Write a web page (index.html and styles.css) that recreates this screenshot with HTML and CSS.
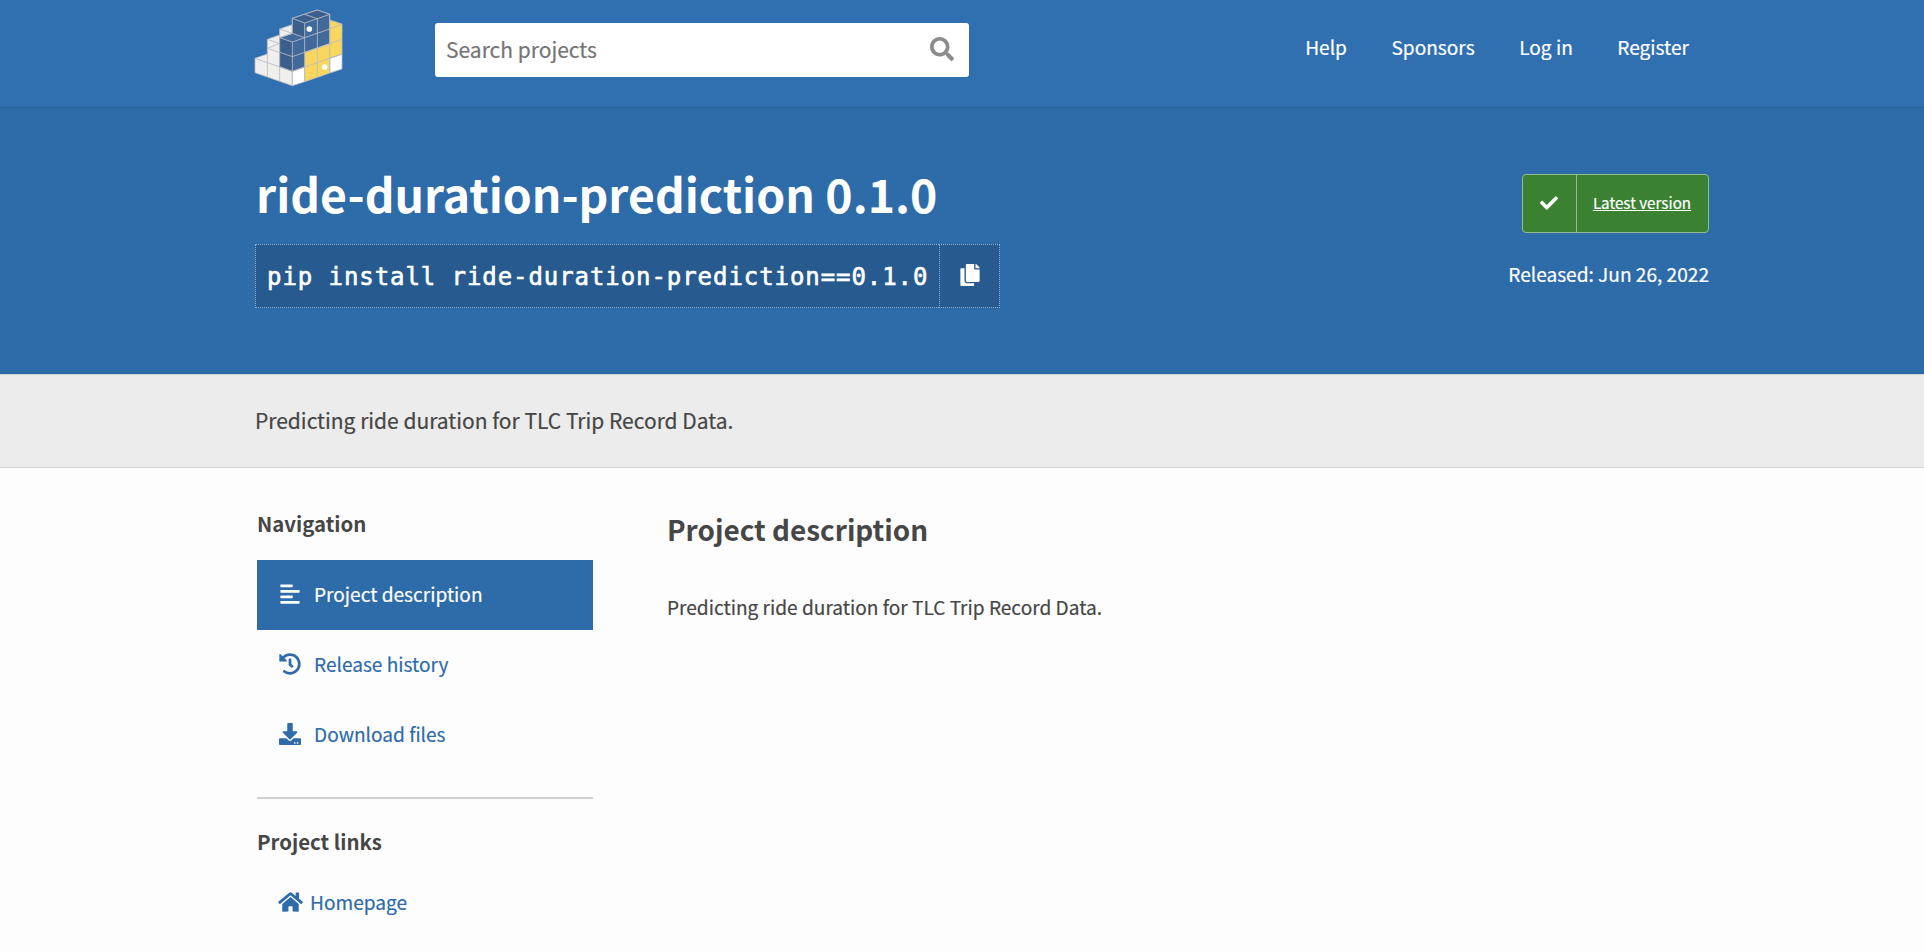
FILE: index.html
```html
<!DOCTYPE html>
<html lang="en">
<head>
<meta charset="utf-8">
<title>ride-duration-prediction · PyPI</title>
<link rel="stylesheet" href="styles.css">
</head>
<body>
<header class="site-header">
  <div class="container header-row">
    <a class="logo" href="#" aria-label="PyPI">
      <svg width="89" height="78" viewBox="42 27 267 234" stroke="#b9bcc4" stroke-width="2.6" stroke-linejoin="round">
        <path fill="#efefed" d="M45 175L82 162V118L119 105V87L157 74V257L45 218Z"/>
        <path fill="none" d="M45 175L157 214M82 162V231M119 105V244M82 118L119 131M82 145L119 158M82 145L119 130M119 87L157 100"/>
        <path fill="#fff" d="M157 214L194 201V245L157 257ZM269 175L306 162V207L269 219Z"/>
        <path fill="#f9d65c" d="M269 60L306 72V162L269 175V219L194 245V157L269 131Z"/>
        <path fill="none" d="M194 201L306 162M269 131L306 118M232 144V232M269 131V219M269 86L306 73"/>
        <path fill="#41699b" d="M119 113L157 100V55L232 30L269 43V131L194 157V201L157 214L119 200Z"/>
        <path fill="#3b5f8d" stroke="none" d="M119 113L157 126V214L119 200ZM157 55L194 69V113L157 100ZM157 55L232 30L269 43L194 69Z"/>
        <path fill="none" d="M119 113L157 126L194 113L157 100ZM157 126V214M119 157L157 170L269 131M157 100V55L232 30L269 43V131M119 113V200L157 214L194 201M157 55L194 69L269 43M194 69V157M232 56V144M194 43L232 56M194 113L269 87"/>
        <g fill="#fff" stroke="none"><circle cx="208" cy="87" r="8.5"/><circle cx="254" cy="201" r="8.5"/></g>
      </svg>
    </a>
    <form class="search">
      <span class="search-text">Search projects</span>
      <svg class="search-icon" width="24" height="24" viewBox="0 0 512 512" fill="#8c8c8c"><path d="M505 442.700L405.300 343c-4.500-4.500-10.600-7-17-7H372c27.600-35.300 44-79.700 44-128C416 93.100 322.900 0 208 0S0 93.100 0 208s93.100 208 208 208c48.300 0 92.700-16.400 128-44v16.300c0 6.400 2.500 12.500 7 17l99.700 99.700c9.400 9.400 24.600 9.400 33.900 0l28.300-28.300c9.400-9.400 9.400-24.600.1-34zM208 336c-70.700 0-128-57.200-128-128 0-70.700 57.200-128 128-128 70.700 0 128 57.200 128 128 0 70.700-57.200 128-128 128z"/></svg>
    </form>
    <nav class="top-nav"><a>Help</a><a>Sponsors</a><a>Log in</a><a>Register</a></nav>
  </div>
</header>
<section class="banner">
  <div class="container banner-row">
    <div class="package">
      <h1>ride-duration-prediction 0.1.0</h1>
      <div class="pip">
        <code class="command">pip install ride-duration-prediction==0.1.0</code>
        <button class="copy" aria-label="Copy"><svg width="20" height="22" viewBox="0 0 448 512" fill="#fff"><path d="M320 448v40c0 13.255-10.745 24-24 24H24c-13.255 0-24-10.745-24-24V120c0-13.255 10.745-24 24-24h72v296c0 30.879 25.121 56 56 56h168zm0-344V0H152c-13.255 0-24 10.745-24 24v368c0 13.255 10.745 24 24 24h272c13.255 0 24-10.745 24-24V128H344c-13.200 0-24-10.800-24-24zm120.971-31.029L375.029 7.029A24 24 0 0 0 358.059 0H352v96h96v-6.059a24 24 0 0 0-7.029-16.970z"/></svg></button>
      </div>
    </div>
    <div class="release">
      <a class="badge">
        <span class="badge-icon"><svg width="18" height="18" viewBox="0 0 512 512" fill="#fff"><path d="M173.898 439.404l-166.400-166.400c-9.997-9.997-9.997-26.206 0-36.204l36.203-36.204c9.997-9.998 26.207-9.998 36.204 0L192 312.690 432.095 72.596c9.997-9.997 26.207-9.997 36.204 0l36.203 36.204c9.997 9.997 9.997 26.206 0 36.204l-294.400 294.401c-9.998 9.997-26.207 9.997-36.204-.001z"/></svg></span>
        <span class="badge-text">Latest version</span>
      </a>
      <p class="released">Released: Jun 26, 2022</p>
    </div>
  </div>
</section>
<section class="summary"><p class="container">Predicting ride duration for TLC Trip Record Data.</p></section>
<main class="container content">
  <aside class="sidebar">
    <h3>Navigation</h3>
    <nav class="tabs">
      <a class="tab active"><svg width="22" height="22" viewBox="0 0 448 512" fill="currentColor"><path d="M12.830 352h262.340A12.820 12.820 0 0 0 288 339.170v-38.340A12.820 12.820 0 0 0 275.170 288H12.830A12.820 12.820 0 0 0 0 300.830v38.340A12.820 12.820 0 0 0 12.830 352zm0-256h262.340A12.820 12.820 0 0 0 288 83.170V44.830A12.820 12.820 0 0 0 275.170 32H12.830A12.820 12.820 0 0 0 0 44.830v38.340A12.820 12.820 0 0 0 12.830 96zM432 160H16a16 16 0 0 0-16 16v32a16 16 0 0 0 16 16h416a16 16 0 0 0 16-16v-32a16 16 0 0 0-16-16zm0 256H16a16 16 0 0 0-16 16v32a16 16 0 0 0 16 16h416a16 16 0 0 0 16-16v-32a16 16 0 0 0-16-16z"/></svg><span>Project description</span></a>
      <a class="tab"><svg width="22" height="22" viewBox="0 0 512 512" fill="currentColor"><path d="M504 255.531c.253 136.640-111.180 248.372-247.820 248.468-59.015.042-113.223-20.530-155.822-54.911-11.077-8.940-11.905-25.541-1.839-35.607l11.267-11.267c8.609-8.609 22.353-9.551 31.891-1.984C173.062 425.135 212.781 440 256 440c101.705 0 184-82.311 184-184 0-101.705-82.311-184-184-184-48.814 0-93.149 18.969-126.068 49.932l50.754 50.754c10.080 10.080 2.941 27.314-11.313 27.314H24c-8.837 0-16-7.163-16-16V38.627c0-14.254 17.234-21.393 27.314-11.314l49.372 49.372C129.209 34.136 189.552 8 256 8c136.810 0 247.747 110.780 248 247.531zm-180.912 78.784l9.823-12.630c8.138-10.463 6.253-25.542-4.210-33.679L288 256.349V152c0-13.255-10.745-24-24-24h-16c-13.255 0-24 10.745-24 24v135.651l65.409 50.874c10.463 8.137 25.541 6.253 33.679-4.210z"/></svg><span>Release history</span></a>
      <a class="tab"><svg width="22" height="22" viewBox="0 0 512 512" fill="currentColor"><path d="M216 0h80c13.300 0 24 10.700 24 24v168h87.700c17.800 0 26.700 21.500 14.100 34.100L269.700 378.300c-7.500 7.500-19.800 7.500-27.300 0L90.100 226.100c-12.600-12.600-3.700-34.100 14.100-34.100H192V24c0-13.300 10.700-24 24-24zm296 376v112c0 13.300-10.700 24-24 24H24c-13.300 0-24-10.700-24-24V376c0-13.300 10.700-24 24-24h146.700l49 49c20.100 20.100 52.500 20.100 72.600 0l49-49H488c13.300 0 24 10.700 24 24zm-124 88c0-11-9-20-20-20s-20 9-20 20 9 20 20 20 20-9 20-20zm64 0c0-11-9-20-20-20s-20 9-20 20 9 20 20 20 20-9 20-20z"/></svg><span>Download files</span></a>
    </nav>
    <h3 class="links-title">Project links</h3>
    <a class="home"><svg width="25" height="22" viewBox="0 0 576 512" fill="currentColor"><path d="M280.370 148.260L96 300.110V464a16 16 0 0 0 16 16l112.060-.290a16 16 0 0 0 15.920-16V368a16 16 0 0 1 16-16h64a16 16 0 0 1 16 16v95.640a16 16 0 0 0 16 16.050L464 480a16 16 0 0 0 16-16V300L295.670 148.260a12.190 12.190 0 0 0-15.300 0zM571.600 251.470L488 182.560V44.050a12 12 0 0 0-12-12h-56a12 12 0 0 0-12 12v72.610L318.470 43a48 48 0 0 0-61 0L4.340 251.470a12 12 0 0 0-1.600 16.900l25.500 31A12 12 0 0 0 45.150 301l235.220-193.740a12.190 12.190 0 0 1 15.300 0L530.900 301a12 12 0 0 0 16.900-1.600l25.500-31a12 12 0 0 0-1.700-16.930z"/></svg><span>Homepage</span></a>
  </aside>
  <article class="description">
    <h2>Project description</h2>
    <p>Predicting ride duration for TLC Trip Record Data.</p>
  </article>
</main>
</body>
</html>
```
FILE: styles.css
```css
* { box-sizing: border-box; }
body { margin: 0; background: #fdfdfd; color: #464646; font-family: "Noto Sans CJK SC", "Noto Sans", sans-serif; font-size: 19.1px; -webkit-text-stroke: 0.2px currentColor; }
h1, h2, h3, p { margin: 0; }
h1, h2, h3 { -webkit-text-stroke: 0; }
svg { display: block; flex: none; }
.container { width: 1492px; margin: 0 0 0 235px; }
.site-header { height: 107px; background: #3070b1; color: #fff; }
.header-row { display: flex; align-items: flex-start; padding-left: 19px; }
.logo { margin-top: 9px; }
.search { display: flex; align-items: center; justify-content: space-between; width: 534px; height: 54px; margin: 23px 0 0 92px; padding: 0 15px 2px 11px; background: #fff; border-radius: 3px; color: #757575; font-size: 21px; line-height: 52px; }
.top-nav { display: flex; gap: 44.5px; margin: 27px 0 0 auto; padding-right: 38px; line-height: 40px; }
.banner { height: 267px; background: #2e6ba9; border-top: 1px solid #2a629b; color: #fff; }
.banner-row { display: flex; justify-content: space-between; padding: 55px 18px 0 20px; }
h1 { padding-left: 1px; font-size: 46.3px; line-height: 60px; font-weight: 700; }
.pip { display: flex; width: fit-content; height: 64px; margin-top: 21px; background: #275b8f; }
.command { padding: 1px 11px 0; border: 1px dotted #8fb0d0; border-right: 0; font: 24px/62px "DejaVu Sans Mono", monospace; letter-spacing: 0.93px; -webkit-text-stroke: 0.6px currentColor; }
.copy { display: flex; align-items: center; justify-content: center; width: 61px; padding: 0 0 2px; background: none; border: 1px dotted #8fb0d0; }
.release { display: flex; flex-direction: column; align-items: flex-end; padding-top: 11px; }
.badge { display: flex; width: 187px; height: 59px; background: #3b8132; border: 1px solid #93bd90; border-radius: 4px; }
.badge-icon { display: flex; align-items: center; justify-content: center; width: 54px; padding: 0 1px 1px 0; border-right: 1px solid #93bd90; }
.badge-text { flex: 1; padding-right: 1px; text-align: center; font-size: 15.2px; line-height: 55px; text-decoration: underline; }
.released { margin-top: 21px; line-height: 40px; }
.summary { height: 94px; background: #ececec; border-top: 1px solid #d0d0d0; border-bottom: 1px solid #d0d0d0; font-size: 21px; line-height: 90px; }
.summary p { padding-left: 20px; }
.content { display: flex; gap: 74px; padding: 35px 20px 0 22px; }
.sidebar { width: 336px; }
h3 { font-size: 20.4px; line-height: 40px; }
.tabs { margin-top: 17px; padding-bottom: 27px; border-bottom: 2px solid #d0d0d0; }
.tab { display: flex; align-items: center; height: 70px; padding: 0 0 2px 22px; gap: 13px; color: #2e6ba9; line-height: 36px; }
.tab.active { background: #2e6ba9; color: #fff; }
.links-title { margin-top: 22px; }
.home { display: flex; align-items: center; gap: 7px; height: 40px; margin-top: 21px; padding-left: 21px; color: #2e6ba9; line-height: 38px; }
h2 { font-size: 27.9px; line-height: 50px; }
.description { padding-top: 1px; }
.description p { margin-top: 28px; line-height: 50px; }
```
